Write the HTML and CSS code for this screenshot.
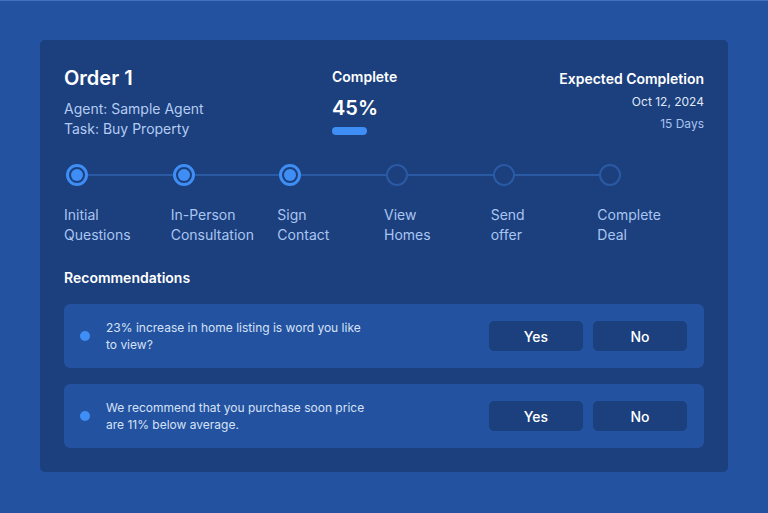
FILE: index.html
```html
<!DOCTYPE html>
<html>
<head>
<meta charset="utf-8">
<link rel="stylesheet" href="styles.css">
</head>
<body>
<div class="page">
  <div class="card">
    <div class="header">
      <div class="order">
        <h1 class="title">Order 1</h1>
        <div class="meta">Agent: Sample Agent</div>
        <div class="meta">Task: Buy Property</div>
      </div>
      <div class="complete">
        <div class="label">Complete</div>
        <div class="pct">45%</div>
        <div class="bar"></div>
      </div>
      <div class="expected">
        <div class="label exp-title">Expected Completion</div>
        <div class="date">Oct 12, 2024</div>
        <div class="days">15 Days</div>
      </div>
    </div>

    <div class="steps">
      <div class="step done"><div class="track"><span class="dot"></span><span class="line"></span></div><div class="step-label">Initial<br>Questions</div></div>
      <div class="step done"><div class="track"><span class="dot"></span><span class="line"></span></div><div class="step-label">In-Person<br>Consultation</div></div>
      <div class="step done"><div class="track"><span class="dot"></span><span class="line"></span></div><div class="step-label">Sign<br>Contact</div></div>
      <div class="step"><div class="track"><span class="dot"></span><span class="line"></span></div><div class="step-label">View<br>Homes</div></div>
      <div class="step"><div class="track"><span class="dot"></span><span class="line"></span></div><div class="step-label">Send<br>offer</div></div>
      <div class="step last"><div class="track"><span class="dot"></span></div><div class="step-label">Complete<br>Deal</div></div>
    </div>

    <h2 class="rec-title">Recommendations</h2>
    <div class="recs">
      <div class="rec">
        <span class="bullet"></span>
        <p class="rec-text">23% increase in home listing is word you like<br>to view?</p>
        <div class="actions"><button class="btn">Yes</button><button class="btn">No</button></div>
      </div>
      <div class="rec">
        <span class="bullet"></span>
        <p class="rec-text">We recommend that you purchase soon price<br>are 11% below average.</p>
        <div class="actions"><button class="btn">Yes</button><button class="btn">No</button></div>
      </div>
    </div>
  </div>
</div>
</body>
</html>
```

FILE: styles.css
```css
* { box-sizing: border-box; }
html, body { margin: 0; padding: 0; }
body {
  width: 768px;
  height: 513px;
  background: #2252a0;
  font-family: Inter, "Noto Sans", "Liberation Sans", sans-serif;
  color: #ffffff;
  overflow: hidden;
}
.page {
  height: 513px;
  border-top: 1px solid #4172c0;
  padding: 39px 40px 0 40px;
}
.card {
  background: #1c3f7d;
  border-radius: 5px;
  height: 432px;
  padding: 24px 24px 0 24px;
}
.header {
  display: flex;
  align-items: flex-start;
}
.order { width: 268px; }
.title {
  margin: 2px 0 9px 0;
  font-size: 20px;
  line-height: 24px;
  font-weight: 600;
}
.meta {
  font-size: 14px;
  line-height: 20px;
  color: #b3ccf3;
}
.complete { flex: 1; padding-top: 4px; }
.label {
  font-size: 14px;
  line-height: 18px;
  font-weight: 600;
}
.pct {
  margin-top: 10px;
  font-size: 20px;
  line-height: 24px;
  font-weight: 600;
}
.bar {
  margin-top: 7px;
  width: 35px;
  height: 8px;
  border-radius: 4px;
  background: #3f8ef5;
}
.expected { text-align: right; padding-top: 6px; }
.exp-title { font-size: 14px; }
.date {
  margin-top: 6px;
  font-size: 12px;
  line-height: 16px;
  color: #dfe8f8;
}
.days {
  margin-top: 6px;
  font-size: 12px;
  line-height: 16px;
  color: #a9c4ef;
}
.steps {
  display: flex;
  margin-top: 25px;
}
.step { flex: 1; }
.track {
  display: flex;
  align-items: center;
  height: 22px;
  padding-left: 2px;
}
.dot {
  width: 22px;
  height: 22px;
  border-radius: 50%;
  border: 2px solid #2b5aa5;
  flex: none;
  position: relative;
}
.step.done .dot {
  border: 3px solid #3f8ef5;
}
.step.done .dot::after {
  content: "";
  position: absolute;
  left: 2px; top: 2px;
  width: 12px; height: 12px;
  border-radius: 50%;
  background: #3f8ef5;
}
.line {
  flex: 1;
  height: 2px;
  background: #2b5aa5;
  margin-right: -2px;
}
.step-label {
  margin-top: 19px;
  font-size: 14px;
  line-height: 20px;
  color: #a9c6f2;
}
.rec-title {
  margin: 23px 0 0 0;
  font-size: 14px;
  line-height: 20px;
  font-weight: 600;
}
.recs {
  margin-top: 16px;
  display: flex;
  flex-direction: column;
  gap: 16px;
}
.rec {
  display: flex;
  align-items: center;
  height: 64px;
  background: #2352a0;
  border-radius: 6px;
  padding: 0 17px 0 16px;
}
.bullet {
  width: 10px;
  height: 10px;
  border-radius: 50%;
  background: #3f8ef5;
  flex: none;
}
.rec-text {
  flex: 1;
  margin: 0 0 0 16px;
  font-size: 12px;
  line-height: 17px;
  color: #d6e2f7;
}
.actions { display: flex; gap: 10px; }
.btn {
  width: 94px;
  height: 30px;
  border: none;
  border-radius: 5px;
  background: #1c3f7d;
  color: #ffffff;
  font-family: Inter, "Noto Sans", "Liberation Sans", sans-serif;
  font-size: 14px;
  font-weight: 500;
  padding: 0;
}
```
